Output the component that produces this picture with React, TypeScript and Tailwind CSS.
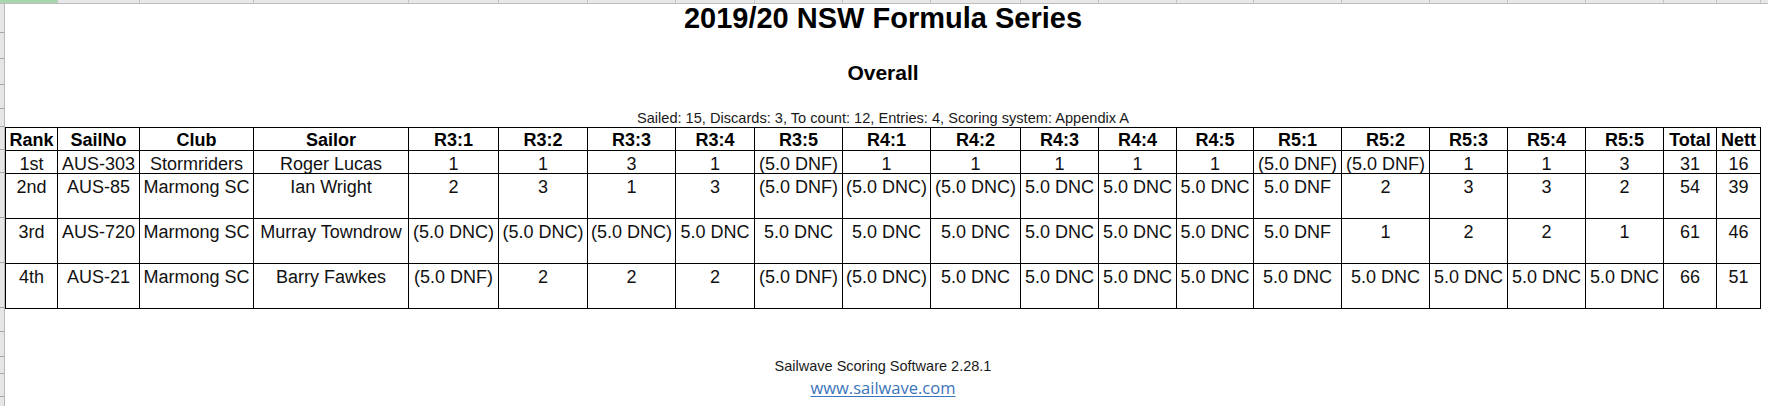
import React from "react";

const colW = [52, 82, 114, 155, 90, 89, 88, 79, 88, 88, 90, 78, 78, 77, 88, 88, 78, 78, 78, 53, 44];

const header = ["Rank", "SailNo", "Club", "Sailor", "R3:1", "R3:2", "R3:3", "R3:4", "R3:5", "R4:1", "R4:2", "R4:3", "R4:4", "R4:5", "R5:1", "R5:2", "R5:3", "R5:4", "R5:5", "Total", "Nett"];

const rows: { h: string; cells: string[] }[] = [
  {
    h: "h-[23px]",
    cells: ["1st", "AUS-303", "Stormriders", "Roger Lucas", "1", "1", "3", "1", "(5.0 DNF)", "1", "1", "1", "1", "1", "(5.0 DNF)", "(5.0 DNF)", "1", "1", "3", "31", "16"],
  },
  {
    h: "h-[45px]",
    cells: ["2nd", "AUS-85", "Marmong SC", "Ian Wright", "2", "3", "1", "3", "(5.0 DNF)", "(5.0 DNC)", "(5.0 DNC)", "5.0 DNC", "5.0 DNC", "5.0 DNC", "5.0 DNF", "2", "3", "3", "2", "54", "39"],
  },
  {
    h: "h-[45px]",
    cells: ["3rd", "AUS-720", "Marmong SC", "Murray Towndrow", "(5.0 DNC)", "(5.0 DNC)", "(5.0 DNC)", "5.0 DNC", "5.0 DNC", "5.0 DNC", "5.0 DNC", "5.0 DNC", "5.0 DNC", "5.0 DNC", "5.0 DNF", "1", "2", "2", "1", "61", "46"],
  },
  {
    h: "h-[45px]",
    cells: ["4th", "AUS-21", "Marmong SC", "Barry Fawkes", "(5.0 DNF)", "2", "2", "2", "(5.0 DNF)", "(5.0 DNC)", "5.0 DNC", "5.0 DNC", "5.0 DNC", "5.0 DNC", "5.0 DNC", "5.0 DNC", "5.0 DNC", "5.0 DNC", "5.0 DNC", "66", "51"],
  },
];

// heights of the spreadsheet rows (left row-header ticks)
const sideRows = [29, 26, 26, 24, 18, 23, 23, 45, 45, 45, 24, 25, 17, 23];

export default function App() {
  return (
    <div
      className="w-[1768px] h-[406px] bg-white overflow-hidden flex flex-col text-[#111]"
      style={{ fontFamily: '"Liberation Sans", Arial, sans-serif' }}
    >
      {/* Excel column header strip */}
      <div className="flex h-[4px] shrink-0 bg-[#e8e8e8] border-b border-[#bdbdbd]">
        <div className="w-[58px] shrink-0 bg-[#a6d7ae] border-r border-[#c4c4c4]" />
        {colW.slice(1).map((w, i) => (
          <div key={i} className="shrink-0 border-r border-[#c4c4c4]" style={{ width: w }} />
        ))}
        <div className="flex-1" />
      </div>

      <div className="flex flex-1">
        {/* Excel row header strip */}
        <div className="w-[5px] shrink-0 flex flex-col bg-[#e6e6e6] border-r border-[#b8b8b8]">
          {sideRows.map((h, i) => (
            <div key={i} className="shrink-0 border-b border-[#a8a8a8]" style={{ height: h }} />
          ))}
          <div className="flex-1" />
        </div>

        {/* Sheet content */}
        <div className="w-[1756px] shrink-0 flex flex-col">
          <div className="h-[29px] flex items-center justify-center">
            <h1 className="text-[29px] font-bold leading-none text-black">2019/20 NSW Formula Series</h1>
          </div>
          <div className="h-[26px]" />
          <div className="h-[26px] flex items-center justify-center">
            <h2 className="text-[21px] font-bold leading-none text-black">Overall</h2>
          </div>
          <div className="h-[24px]" />
          <div className="h-[18px] flex items-end justify-center">
            <p className="text-[14.6px] leading-[17px] text-[#1a1a1a]">
              Sailed: 15, Discards: 3, To count: 12, Entries: 4, Scoring system: Appendix A
            </p>
          </div>

          {/* Results table */}
          <div className="grid w-fit border-l border-t border-black grid-cols-[52px_82px_114px_155px_90px_89px_88px_79px_88px_88px_90px_78px_78px_77px_88px_88px_78px_78px_78px_53px_44px]">
            {header.map((t, i) => (
              <div
                key={"h" + i}
                className="h-[23px] pt-[1px] border-r border-b border-black text-center text-[18px] font-bold leading-[22px] whitespace-nowrap overflow-hidden text-black"
              >
                {t}
              </div>
            ))}
            {rows.map((r, ri) =>
              r.cells.map((t, ci) => (
                <div
                  key={ri + "-" + ci}
                  className={
                    r.h +
                    " pt-[2px] border-r border-b border-black text-center text-[18px] leading-[22px] whitespace-nowrap overflow-hidden"
                  }
                >
                  {t}
                </div>
              ))
            )}
          </div>

          <div className="h-[24px]" />
          <div className="h-[25px]" />
          <div className="h-[17px] flex items-center justify-center">
            <p className="text-[14.5px] leading-none text-[#1a1a1a]">Sailwave Scoring Software 2.28.1</p>
          </div>
          <div className="h-[23px] flex items-center justify-center pt-[3px]">
            <a
              href="#"
              className="text-[16.5px] leading-none text-[#3a74ba] underline underline-offset-2"
              style={{ fontFamily: '"Open Sans", "Noto Sans", sans-serif' }}
            >
              www.sailwave.com
            </a>
          </div>
        </div>
      </div>
    </div>
  );
}
